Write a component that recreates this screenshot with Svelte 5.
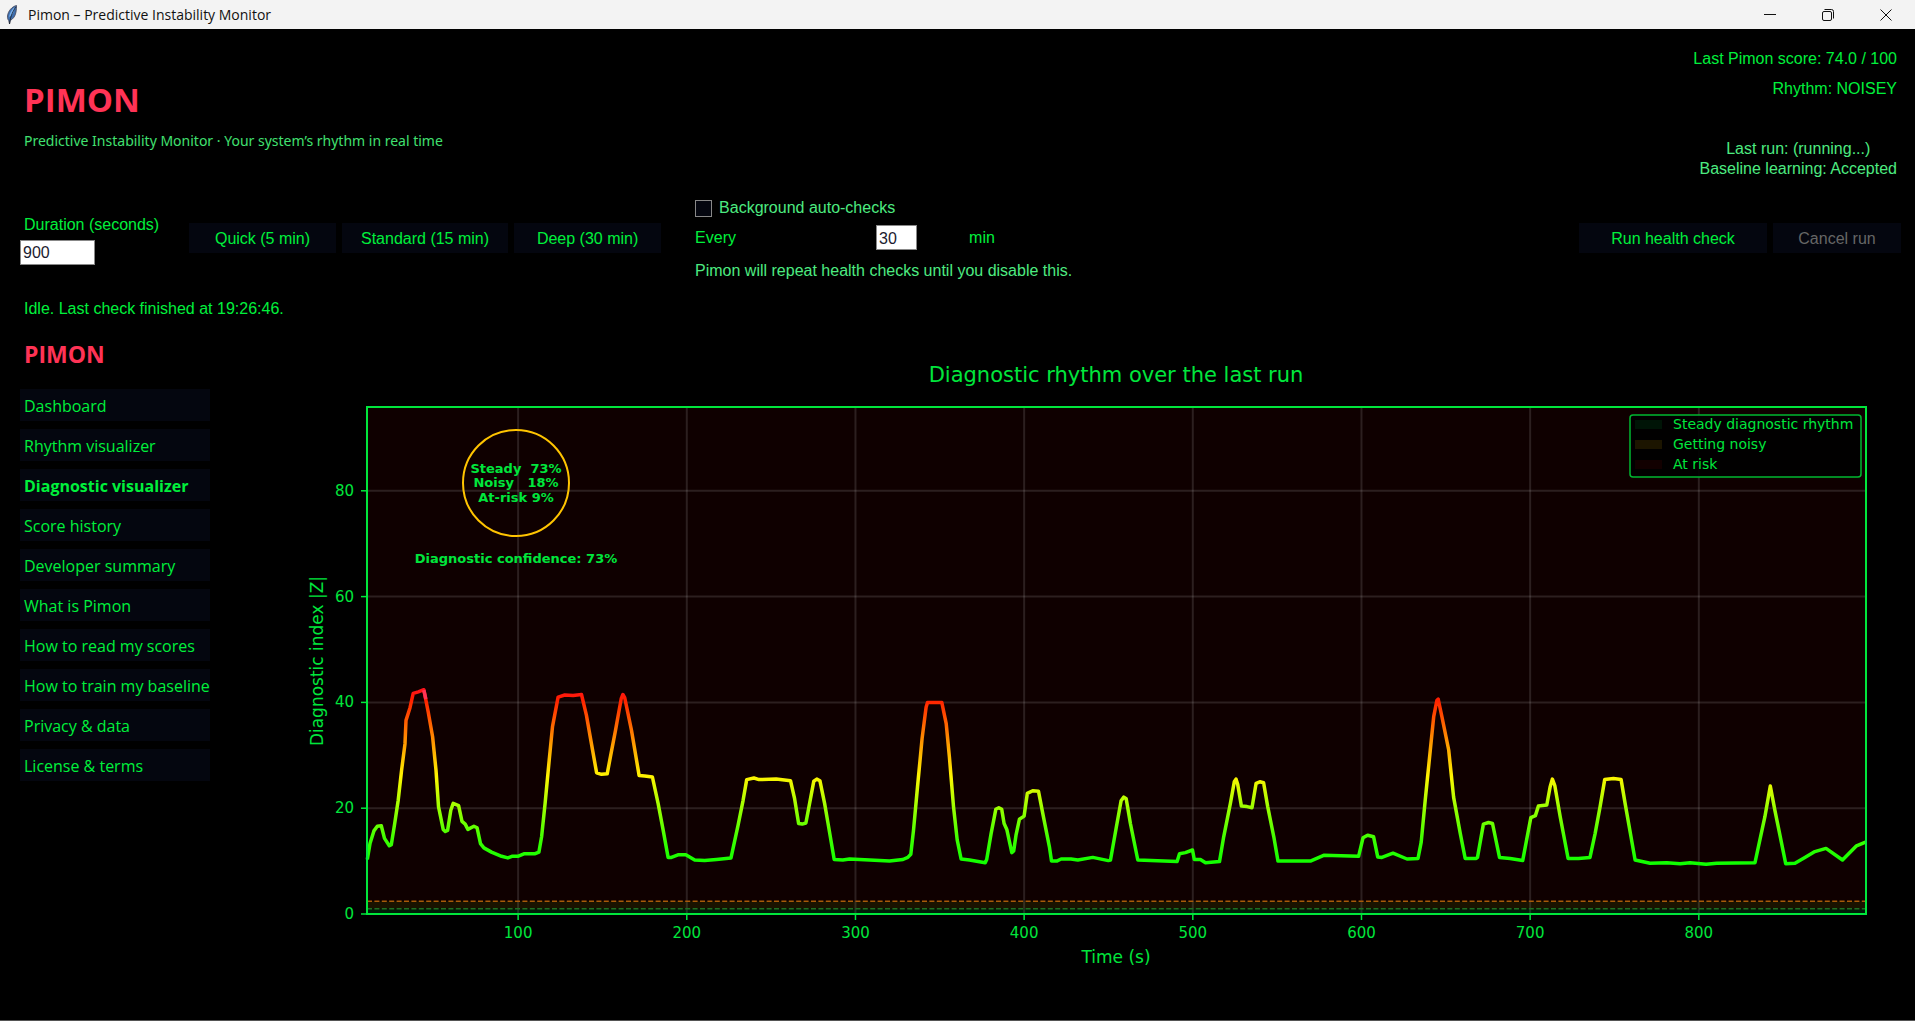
<script lang="ts">
  let duration = $state('900');
  let interval = $state('30');
  let autoChecks = $state(false);
  let activePage = $state('Diagnostic visualizer');

  const pages = [
    'Dashboard',
    'Rhythm visualizer',
    'Diagnostic visualizer',
    'Score history',
    'Developer summary',
    'What is Pimon',
    'How to read my scores',
    'How to train my baseline',
    'Privacy & data',
    'License & terms'
  ];

  const presets = [
    { label: 'Quick (5 min)', seconds: 300 },
    { label: 'Standard (15 min)', seconds: 900 },
    { label: 'Deep (30 min)', seconds: 1800 }
  ];

  // Plot area inside the chart's viewBox
  const plot = { left: 157, right: 1656, top: 67, bottom: 574 };
  const xTicks = [100, 200, 300, 400, 500, 600, 700, 800];
  const yTicks = [0, 20, 40, 60, 80];

  const steadyLimit = 1;
  const noisyLimit = 2.4;

  const legend = [
    { label: 'Steady diagnostic rhythm', color: '#001406' },
    { label: 'Getting noisy', color: '#1c1500' },
    { label: 'At risk', color: '#120000' }
  ];

  // [seconds, |Z|]
  const samples = [
    [10.6, 10.3], [12.2, 13.3], [14.5, 15.7], [16.5, 16.6], [18.9, 16.7], [20.8, 14.3],
    [23.6, 12.9], [24.8, 13.1], [26.8, 17.1], [28.9, 21.5], [30.9, 27.2], [32.9, 32.2],
    [33.5, 36.6], [35.9, 39], [37.8, 41.7], [40.8, 42], [44.1, 42.4], [46.7, 38.2],
    [49.3, 33.5], [51.3, 27.2], [52.8, 20.3], [55.6, 16], [56.8, 15.6], [58.2, 15.8],
    [60.1, 19.6], [61.5, 20.9], [64.7, 20.5], [66.7, 17.5], [68.6, 17], [70.2, 16],
    [73.8, 16.6], [75.7, 16.3], [77.7, 13.3], [79.7, 12.5], [84.2, 11.7], [90.2, 10.9],
    [93.9, 10.6], [96.3, 10.9], [99.8, 10.9], [103.8, 11.4], [110.1, 11.4], [112.3, 11.7],
    [113.9, 14.6], [116, 20.9], [118.4, 29.1], [120.4, 35.4], [123.7, 41], [127.7, 41.4],
    [132.6, 41.3], [137.6, 41.5], [140.5, 37.6], [142.9, 33.2], [146.5, 26.7], [149.4, 26.4],
    [152.8, 26.5], [154.7, 29.7], [157.7, 34.7], [161.1, 40.7], [162.1, 41.5], [163.2, 40.9],
    [167.2, 34.7], [171.7, 26.2], [175.1, 26.1], [179.6, 25.9], [183, 20.9], [186, 15.8],
    [188.9, 10.7], [190.9, 10.7], [194.8, 11.2], [199.4, 11.2], [204.7, 10.2], [210.6, 10.1],
    [217.6, 10.3], [226.2, 10.6], [230.4, 16.8], [233.4, 21.5], [235.5, 25.4], [239.8, 25.7],
    [242.8, 25.4], [253, 25.5], [261.5, 25.2], [263.9, 21.8], [266.3, 17.1], [268.4, 17],
    [270.6, 17.2], [272.8, 20.9], [275.3, 25.1], [277.1, 25.5], [278.9, 25.2], [281.7, 20.9],
    [283.6, 17.4], [287.4, 10.3], [292.5, 10.2], [296.5, 10.4], [320.2, 10], [328.1, 10.3],
    [331, 10.7], [332.8, 11.3], [334.4, 15.8], [336.8, 24], [339.5, 33.2], [341.9, 39.1],
    [342.7, 40], [351.2, 40], [353.8, 36], [355.7, 29.7], [358.1, 20.3], [360.3, 14],
    [362.6, 10.4], [367.6, 10.2], [376.9, 9.7], [377.8, 10.3], [380.4, 15.2], [383.2, 19.8],
    [385, 20.1], [386.7, 19.8], [388.1, 17.1], [389.7, 16], [392.7, 11.6], [393.8, 11.9],
    [395.2, 14.9], [397.2, 17.9], [400, 18.5], [401.9, 22.8], [405.1, 23.3], [408.5, 23.2],
    [411.4, 18.4], [415, 12.7], [416.2, 10], [419.3, 10], [421.9, 10.4], [427.8, 10.4],
    [431.8, 10.2], [440.7, 10.7], [449.9, 10.1], [451.2, 10.2], [454.7, 16.5], [457.5, 21.4],
    [459.1, 22.1], [460.5, 21.8], [463, 17.1], [467.4, 10.2], [490.7, 9.9], [492.1, 11.4],
    [495.6, 11.6], [499.8, 12.1], [500.9, 10.3], [504.5, 10.3], [507.5, 9.7], [515.8, 9.9],
    [518.3, 14.6], [522.3, 20.9], [524.6, 25], [525.6, 25.5], [526.6, 24.5], [528.8, 20.4],
    [532.1, 20.3], [535.1, 20.1], [537.5, 24.7], [539.7, 25], [542, 24.8], [544.4, 20.3],
    [548, 14.6], [550.5, 10], [569.7, 10], [577.6, 11.1], [598.3, 10.9], [600.9, 14.4],
    [603.6, 14.9], [607.2, 14.6], [609.6, 10.8], [612.1, 10.7], [618.7, 11.5], [627, 10.4],
    [633.5, 10.5], [635.4, 13.6], [637.8, 21.5], [640.8, 31], [642.8, 37.3], [644.7, 40.4],
    [645.5, 40.6], [647.7, 37.3], [651.7, 31], [654.6, 22.1], [658.6, 15.2], [661.5, 10.5],
    [668, 10.5], [668.8, 10.7], [672.3, 17], [675.3, 17.3], [677.7, 17.1], [681.8, 10.7],
    [688.1, 10.5], [695.6, 10.1], [700.4, 18.2], [703.1, 18.6], [704.9, 20.4], [709.9, 20.6],
    [711.8, 24], [713.2, 25.5], [714.6, 24.3], [717.8, 18.4], [722.5, 10.5], [728.6, 10.5],
    [735.5, 10.7], [738.5, 15.2], [741.5, 20.3], [744.2, 25.4], [749.4, 25.6], [753.9, 25.4],
    [756.3, 20.9], [762.2, 10.2], [771.1, 9.6], [781, 9.7], [788.9, 9.5], [794.8, 9.7],
    [804.3, 9.4], [810.6, 9.6], [833.3, 9.7], [839.2, 18.4], [842.4, 24.2], [845.1, 19.6],
    [851.5, 9.5], [857, 9.6], [862.9, 10.7], [868.8, 11.8], [875.4, 12.4], [885.2, 10.2],
    [893.5, 12.9], [898.8, 13.6]
  ];

  function sx(t: number) {
    return plot.left + (t - 10.4) * 1.6867;
  }

  function sy(z: number) {
    return plot.bottom - z * 5.29;
  }

  const trace = samples.map(([t, z]) => `${sx(t).toFixed(1)},${sy(z).toFixed(1)}`).join(' ');
</script>

<div class="window">
  <div class="titlebar">
    <svg class="feather" viewBox="0 0 12 20" aria-hidden="true">
      <path d="M10.500 0.500C6 1.500 2 6 1.500 11c-0.200 2 0.300 3.500 1.200 4.500L3.500 19l0.800-3.500C7 14 9.500 11 10 7c0.300-2.500 0.700-4.500 0.500-6.500z" fill="#3f6fae" stroke="#445" stroke-width="0.800" />
      <path d="M9 2C6 4 3.500 8 3 12c2-1 4.500-4 5-6z" fill="#7ab2f0" />
      <path d="M9.500 2C7.500 6 4.500 10 3.500 19" fill="none" stroke="#1c2430" stroke-width="0.900" />
    </svg>
    <span class="caption">Pimon – Predictive Instability Monitor</span>
    <button class="win-btn" aria-label="Minimize">
      <svg viewBox="0 0 12 12"><path d="M0 5.500h12" /></svg>
    </button>
    <button class="win-btn" aria-label="Restore">
      <svg viewBox="0 0 12 12">
        <rect x="0.500" y="2.500" width="9" height="9" rx="1.500" />
        <path d="M2.500 0.500H9.500a2 2 0 0 1 2 2V9.500" />
      </svg>
    </button>
    <button class="win-btn" aria-label="Close">
      <svg viewBox="0 0 12 12"><path d="M0.500 0.500l11 11M11.500 0.500l-11 11" /></svg>
    </button>
  </div>

  <header>
    <div class="brand">
      <h1>PIMON</h1>
      <p>Predictive Instability Monitor · Your system’s rhythm in real time</p>
    </div>
    <div class="scores">
      <span class="score">Last Pimon score: 74.0 / 100</span>
      <span class="score">Rhythm: NOISEY</span>
      <p class="last-run">Last run: (running...)<br />Baseline learning: Accepted</p>
    </div>
  </header>

  <section class="controls">
    <div class="duration">
      <label for="duration">Duration (seconds)</label>
      <input id="duration" type="text" bind:value={duration} />
    </div>
    <div class="buttons">
      {#each presets as { label, seconds }}
        <button class="btn" onclick={() => (duration = String(seconds))}>{label}</button>
      {/each}
    </div>
    <div class="auto">
      <label class="check">
        <input type="checkbox" bind:checked={autoChecks} />
        Background auto-checks
      </label>
      <div class="every">
        <label for="interval">Every</label>
        <input id="interval" type="text" bind:value={interval} />
        <span>min</span>
      </div>
      <p>Pimon will repeat health checks until you disable this.</p>
    </div>
    <div class="buttons run">
      <button class="btn wide">Run health check</button>
      <button class="btn narrow" disabled>Cancel run</button>
    </div>
  </section>

  <p class="status">Idle. Last check finished at 19:26:46.</p>

  <main>
    <aside>
      <h2>PIMON</h2>
      <nav>
        {#each pages as page}
          <button class:active={page === activePage} onclick={() => (activePage = page)}>{page}</button>
        {/each}
      </nav>
    </aside>

    <svg class="chart" viewBox="0 0 1685 660" role="img" aria-label="Diagnostic rhythm over the last run">
      <defs>
        <linearGradient id="heat" gradientUnits="userSpaceOnUse" x1="0" x2="0" y1={sy(9)} y2={sy(43)}>
          <stop offset="0" stop-color="#0aff00" />
          <stop offset="0.150" stop-color="#3cff00" />
          <stop offset="0.350" stop-color="#a8ff00" />
          <stop offset="0.500" stop-color="#fff500" />
          <stop offset="0.620" stop-color="#ffb900" />
          <stop offset="0.760" stop-color="#ff7300" />
          <stop offset="0.930" stop-color="#ff1e00" />
          <stop offset="1" stop-color="#ff1022" />
        </linearGradient>
      </defs>

      <text class="title" x="906" y="42">Diagnostic rhythm over the last run</text>

      <!-- risk bands -->
      <rect x={plot.left} y={plot.top} width={plot.right - plot.left} height={sy(noisyLimit) - plot.top} fill="#0f0000" />
      <rect x={plot.left} y={sy(noisyLimit)} width={plot.right - plot.left} height={sy(steadyLimit) - sy(noisyLimit)} fill="#1a1300" />
      <rect x={plot.left} y={sy(steadyLimit)} width={plot.right - plot.left} height={plot.bottom - sy(steadyLimit)} fill="#001a08" />

      {#each xTicks as t}
        <line class="grid" x1={sx(t)} x2={sx(t)} y1={plot.top} y2={plot.bottom} />
        <line class="axis" x1={sx(t)} x2={sx(t)} y1={plot.bottom} y2={plot.bottom + 6} />
        <text class="tick mid" x={sx(t)} y={plot.bottom + 24}>{t}</text>
      {/each}
      {#each yTicks as z}
        <line class="grid" x1={plot.left} x2={plot.right} y1={sy(z)} y2={sy(z)} />
        <line class="axis" x1={plot.left - 6} x2={plot.left} y1={sy(z)} y2={sy(z)} />
        <text class="tick end" x={plot.left - 13} y={sy(z) + 5}>{z}</text>
      {/each}

      <line class="limit noisy" x1={plot.left} x2={plot.right} y1={sy(noisyLimit)} y2={sy(noisyLimit)} />
      <line class="limit steady" x1={plot.left} x2={plot.right} y1={sy(steadyLimit)} y2={sy(steadyLimit)} />

      <polyline class="trace" points={trace} />
      <line class="peak" x1={sx(44.1)} y1={sy(42.3)} x2={sx(45.3)} y2={sy(40.6)} />

      <rect class="frame" x={plot.left} y={plot.top} width={plot.right - plot.left} height={plot.bottom - plot.top} />

      <circle class="gauge" cx="306" cy="143" r="53" />
      <text class="note" x="306" y="133">Steady  73%</text>
      <text class="note" x="306" y="147">Noisy   18%</text>
      <text class="note" x="306" y="162">At-risk 9%</text>
      <text class="note" x="306" y="223">Diagnostic confidence: 73%</text>

      <rect class="legend-box" x="1420" y="75" width="231" height="62" rx="3" />
      {#each legend as { label, color }, i}
        <rect x="1425" y={80 + i * 20} width="27" height="9" fill={color} />
        <text class="legend" x="1463" y={89 + i * 20}>{label}</text>
      {/each}

      <text class="label" x="906" y="623">Time (s)</text>
      <text class="label" transform="translate(113 321) rotate(-90)">Diagnostic index |Z|</text>
    </svg>
  </main>
</div>

<style>
  :global(body) {
    margin: 0;
    background: #000;
  }

  .window {
    box-sizing: border-box;
    min-height: 100vh;
    background: #000;
    border-bottom: 1px solid #555;
    color: #00f03c;
    font-family: 'Liberation Sans', Arial, sans-serif;
    font-size: 16px;
    line-height: 20px;
  }

  h1,
  h2,
  p {
    margin: 0;
  }

  button,
  input {
    font: inherit;
    color: inherit;
    border: 0;
    padding: 0;
    margin: 0;
  }

  .titlebar {
    display: flex;
    align-items: center;
    height: 29px;
    padding-left: 6px;
    background: #f3f3f3;
    color: #111;
  }

  .feather {
    width: 12px;
    height: 20px;
  }

  .caption {
    flex: 1;
    margin-left: 10px;
    font-family: 'Open Sans', 'Noto Sans', sans-serif;
    font-size: 14px;
  }

  .win-btn {
    width: 58px;
    height: 29px;
    background: none;
    line-height: 0;
  }

  .win-btn svg {
    width: 12px;
    height: 12px;
    fill: none;
    stroke: #111;
  }

  header {
    display: flex;
    justify-content: space-between;
    padding: 0 18px 19px 24px;
  }

  .brand {
    padding-top: 49px;
    font-family: 'Noto Sans', 'Open Sans', sans-serif;
  }

  .brand h1 {
    color: #ff3355;
    font-family: 'Open Sans', 'Noto Sans', sans-serif;
    font-size: 33px;
    line-height: 44px;
    margin-bottom: 9px;
  }

  .brand p {
    color: #40e070;
    font-size: 14px;
  }

  .scores {
    display: flex;
    flex-direction: column;
    align-items: flex-end;
    padding-top: 15px;
  }

  .score {
    line-height: 30px;
  }

  .last-run {
    margin-top: 35px;
    color: #4deb80;
    text-align: center;
  }

  .controls {
    display: flex;
    align-items: center;
    padding: 0 14px 0 20px;
  }

  .duration {
    display: flex;
    flex-direction: column;
    gap: 5px;
    width: 169px;
  }

  .duration label {
    padding-left: 4px;
  }

  input[type='text'] {
    box-sizing: border-box;
    width: 75px;
    height: 25px;
    padding: 2px 2px 0;
    border: 1px solid #888;
    background: #fff;
    color: #1c1c30;
  }

  .buttons {
    display: flex;
    gap: 6px;
    padding-bottom: 3px;
  }

  .btn {
    min-width: 147px;
    height: 30px;
    padding: 1px 19px 0;
    background: #04060f;
  }

  .btn:disabled {
    color: #666;
  }

  .btn.wide {
    min-width: 188px;
  }

  .btn.narrow {
    min-width: 128px;
  }

  .auto {
    display: flex;
    flex-direction: column;
    gap: 7px;
    margin-left: 34px;
  }

  .auto p,
  .check {
    color: #4deb80;
  }

  .auto p {
    margin-top: 4px;
  }

  .check {
    display: flex;
    align-items: center;
    gap: 7px;
  }

  .check input {
    box-sizing: border-box;
    appearance: none;
    width: 17px;
    height: 17px;
    border: 1px solid #888;
    background: #04060f;
  }

  .check input:checked {
    background: #00f03c;
  }

  .every {
    display: grid;
    grid-template-columns: 181px 93px auto;
    align-items: center;
  }

  .every input[type='text'] {
    width: 41px;
  }

  .run {
    margin-left: auto;
  }

  .status {
    padding: 18px 24px 20px;
  }

  main {
    display: flex;
    align-items: flex-start;
    padding: 0 20px;
  }

  aside {
    flex: none;
    width: 190px;
    font-family: 'Open Sans', 'Noto Sans', sans-serif;
  }

  aside h2 {
    padding-left: 4px;
    margin-bottom: 20px;
    color: #ff3355;
    font-size: 23px;
    line-height: 30px;
  }

  nav {
    display: flex;
    flex-direction: column;
    gap: 8px;
  }

  nav button {
    height: 32px;
    padding: 1px 0 0 4px;
    background: #04060f;
    font-size: 16px;
    text-align: left;
    white-space: nowrap;
  }

  nav button.active {
    font-weight: bold;
  }

  .chart {
    flex: 1;
    min-width: 0;
    height: auto;
    margin-top: 1px;
    font-family: 'DejaVu Sans', sans-serif;
  }

  .chart text {
    fill: #00e63c;
    white-space: pre;
  }

  .title,
  .label,
  .note,
  .mid {
    text-anchor: middle;
  }

  .end {
    text-anchor: end;
  }

  .title {
    font-size: 21px;
  }

  .label {
    font-size: 17px;
  }

  .tick {
    font-size: 15px;
  }

  .legend {
    font-size: 14px;
  }

  .note {
    font-size: 13px;
    font-weight: bold;
  }

  .grid {
    stroke: #fff;
    stroke-opacity: 0.12;
    stroke-width: 2;
  }

  .axis {
    stroke: #00e63c;
    stroke-width: 1.5;
  }

  .frame {
    fill: none;
    stroke: #00e63c;
    stroke-width: 2;
  }

  .limit {
    stroke-width: 1.5;
    stroke-dasharray: 5 2.4;
  }

  .limit.noisy {
    stroke: #a85a08;
  }

  .limit.steady {
    stroke: #1f6f22;
  }

  .trace {
    fill: none;
    stroke: url(#heat);
    stroke-width: 3.5;
    stroke-linejoin: round;
  }

  .peak {
    stroke: #ff3355;
    stroke-width: 3.5;
  }

  .gauge {
    fill: none;
    stroke: #ffc400;
    stroke-width: 2;
  }

  .legend-box {
    fill: #000;
    fill-opacity: 0.9;
    stroke: #00b830;
    stroke-width: 1.5;
  }
</style>
